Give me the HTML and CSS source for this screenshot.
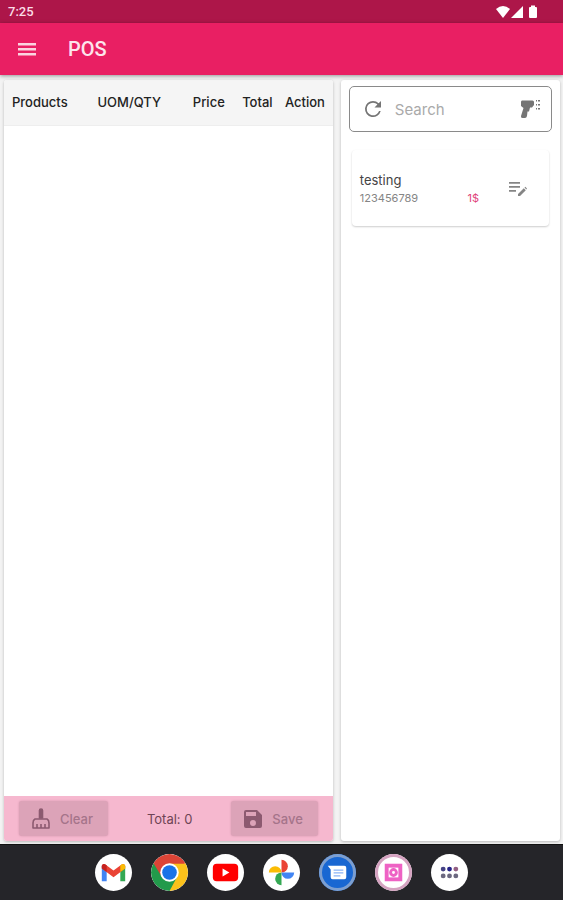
FILE: index.html
```
<!doctype html>
<html lang="en">
<head>
<meta charset="utf-8">
<meta name="viewport" content="width=device-width, initial-scale=1">
<title>POS</title>
<link rel="stylesheet" href="styles.css">
</head>
<body>
<div class="status-bar">
	<span class="clock">7:25</span>
	<svg class="status-icons" width="43" height="14" viewBox="0 0 43 14" fill="#fff" aria-hidden="true">
		<path d="M0 4Q7 -2 14 4L7 13Z"/>
		<path d="M27 1V13H15Z"/>
		<path d="M35 2V0.500H39V2H40Q41 2 41 3V12Q41 13 40 13H34Q33 13 33 12V3Q33 2 34 2Z"/>
	</svg>
</div>

<header class="app-bar">
	<button class="icon-button menu" aria-label="Menu">
		<svg width="18" height="14" viewBox="0 0 18 14" fill="#fbd3e0"><path d="M0 1h18v2.500H0zM0 6h18v2.500H0zM0 11h18v2.500H0z"/></svg>
	</button>
	<h1>POS</h1>
</header>

<main class="content">
	<section class="panel cart">
		<table class="cart-table">
			<thead>
				<tr>
					<th class="col-product">Products</th>
					<th class="col-uom">UOM/QTY</th>
					<th class="col-price">Price</th>
					<th class="col-total">Total</th>
					<th>Action</th>
				</tr>
			</thead>
			<tbody></tbody>
		</table>
		<div class="cart-footer">
			<button class="action" disabled>
				<svg width="18" height="22" viewBox="0 0 18 22" fill="none" stroke="#8c5a70" stroke-width="1.600" stroke-linejoin="round">
					<path d="M7.500 10V2.500Q7.500 1 9 1T10.500 2.500V10Z" fill="#8c5a70"/>
					<path d="M3 11H15Q17 12 17 15V20H1V15Q1 12 3 11ZM5 20V16M9 20V16M13 20V16"/>
				</svg>
				<span>Clear</span>
			</button>
			<span class="total">Total: 0</span>
			<button class="action" disabled>
				<svg width="18" height="18" viewBox="0 0 18 18" fill="#8c5a70" fill-rule="evenodd">
					<path d="M2 0H13L18 5V16Q18 18 16 18H2Q0 18 0 16V2Q0 0 2 0ZM2 2V6H12V2ZM9 10A3 3 0 1 0 9 16A3 3 0 1 0 9 10Z"/>
				</svg>
				<span>Save</span>
			</button>
		</div>
	</section>

	<section class="panel catalog">
		<div class="search">
			<button class="icon-button" aria-label="Refresh">
				<svg width="24" height="24" viewBox="0 0 24 24" fill="#757575"><path d="M17.650 6.350A7.960 7.960 0 0 0 12 4a8 8 0 1 0 7.730 10h-1.700A6.300 6.300 0 1 1 12 5.700c1.700 0 3.200.7 4.400 1.800L13.500 10.500H20V4z"/></svg>
			</button>
			<input type="text" placeholder="Search" aria-label="Search">
			<button class="icon-button" aria-label="Scan barcode">
				<svg width="20" height="20" viewBox="0 0 20 20" fill="#757575">
					<path d="M2 1.500H12.500Q14 1.500 14 3V6L12 8.500H10L9 12.500H7.500L7 17Q6.500 19 5 19H2.500Q0.500 19 1 17L3.500 9L1 7V3Q1 1.500 2 1.500Z"/>
					<path d="M16 1h1v1.500h-1zM18 1h2v1.500h-2zM16 5h1v1.500h-1zM18 5h2v1.500h-2zM16 9h1v1.500h-1zM18 9h2v1.500h-2z"/>
				</svg>
			</button>
		</div>

		<article class="product">
			<div class="product-info">
				<h2>testing</h2>
				<div class="product-meta">
					<span>123456789</span>
					<span class="price">1$</span>
				</div>
			</div>
			<button class="icon-button" aria-label="Edit product">
				<svg width="18" height="16" viewBox="0 0 18 16" fill="#858585">
					<path d="M0 1h11v1.800H0zM0 5h11v1.800H0zM0 9h7v1.800H0z"/>
					<path d="M9 13L14.800 7.200L16.800 9.200L11 15H9ZM15.500 6.500L16.300 5.700L18 7.500L17.300 8.500Z"/>
				</svg>
			</button>
		</article>
	</section>
</main>

<nav class="dock">
	<button class="app" aria-label="Gmail">
		<svg viewBox="0 0 38 38">
			<path d="M7 12V28H12V17Z" fill="#4285f4"/>
			<path d="M31 12V28H26V17Z" fill="#34a853"/>
			<path d="M7 12Q8 9 11 11L19 17L27 11Q30 9 31 12V15L19 24L7 15Z" fill="#ea4335"/>
			<path d="M7 12Q8 9 12 11.500V18.500L7 15Z" fill="#c5221f"/>
			<path d="M26 11.500Q30 9 31 12V15L26 18.500Z" fill="#fbbc04"/>
		</svg>
	</button>
	<button class="app" aria-label="Chrome">
		<svg viewBox="0 0 38 38">
			<path d="M19 19L2.550 9.500A19 19 0 0 1 35.450 9.500Z" fill="#dc4436"/>
			<path d="M19 19L35.450 9.500A19 19 0 0 1 19 38Z" fill="#fcc21b"/>
			<path d="M19 19L19 38A19 19 0 0 1 2.550 9.500Z" fill="#229a4b"/>
			<path d="M19 10H35.700L26.800 23.500Z" fill="#fcc21b"/>
			<path d="M26.800 23.500L19 38L12 24Z" fill="#229a4b"/>
			<path d="M11.200 23.500L2.550 9.500L19 10Z" fill="#dc4436"/>
			<circle cx="19" cy="19" r="9.500" fill="#fff"/>
			<circle cx="19" cy="19" r="7.500" fill="#1a73e8"/>
		</svg>
	</button>
	<button class="app" aria-label="YouTube">
		<svg viewBox="0 0 38 38">
			<rect x="6" y="10" width="26" height="18" rx="4" fill="#f00"/>
			<path d="M16 15V23L23 19Z" fill="#fff"/>
		</svg>
	</button>
	<button class="app" aria-label="Photos">
		<svg viewBox="0 0 38 38">
			<path d="M19 19V6A6.500 6.500 0 0 1 19 19Z" fill="#ea4335"/>
			<path d="M19 19H32A6.500 6.500 0 0 1 19 19Z" fill="#4285f4"/>
			<path d="M19 19V32A6.500 6.500 0 0 1 19 19Z" fill="#34a853"/>
			<path d="M19 19H6A6.500 6.500 0 0 1 19 19Z" fill="#fbbc04"/>
		</svg>
	</button>
	<button class="app messages" aria-label="Messages">
		<svg viewBox="0 0 38 38">
			<path d="M9 12H26Q28 12 28 14V24Q28 26 26 26H14Q12 26 12 24V16Z" fill="#fff"/>
			<path d="M15 16.500H25M15 19.500H25M15 22.500H22" stroke="#8ab4f8" stroke-width="1.300"/>
		</svg>
	</button>
	<button class="app pos" aria-label="POS">
		<svg viewBox="0 0 38 38">
			<rect x="12" y="12" width="14" height="14" fill="#fff" stroke="#ee62c4" stroke-width="4"/>
			<circle cx="19" cy="19" r="3" fill="none" stroke="#ee62c4" stroke-width="3"/>
		</svg>
	</button>
	<button class="app" aria-label="All apps">
		<svg viewBox="0 0 38 38" fill="#6b6880">
			<circle cx="12.500" cy="15.500" r="2.500" fill="#454385"/>
			<circle cx="19" cy="15.500" r="2.500" fill="#25238a"/>
			<circle cx="25.500" cy="15.500" r="2.500" fill="#946084"/>
			<circle cx="12.500" cy="22.500" r="2.500"/>
			<circle cx="19" cy="22.500" r="2.500"/>
			<circle cx="25.500" cy="22.500" r="2.500"/>
		</svg>
	</button>
</nav>
</body>
</html>
```
FILE: styles.css
```
* {
	margin: 0;
	padding: 0;
	box-sizing: border-box;
}

body {
	display: flex;
	flex-direction: column;
	min-height: 100vh;
	background: #f3f3f3;
	font: 13px Inter, sans-serif;
	color: #222;
}

button {
	border: 0;
	background: none;
	font: inherit;
}

svg {
	display: block;
}

.status-bar {
	display: flex;
	justify-content: space-between;
	align-items: center;
	height: 23px;
	padding: 0 24px 0 8px;
	background: #ad1649;
	color: #fbdde7;
	font: 500 13px Roboto, sans-serif;
}

.app-bar {
	display: flex;
	align-items: center;
	gap: 32px;
	height: 52px;
	padding: 0 18px;
	background: #e91f63;
	box-shadow: 0 1px 4px rgba(0, 0, 0, 0.4);
	z-index: 1;
}

.app-bar h1 {
	font: 500 20px Roboto, sans-serif;
	color: #fde4ec;
}

.icon-button {
	flex: none;
	cursor: pointer;
}

.content {
	flex: 1;
	display: grid;
	grid-template-columns: 3fr 2fr;
	gap: 8px;
	padding: 5px 3px 3px 4px;
}

.panel {
	display: flex;
	flex-direction: column;
	min-width: 0;
	background: #fff;
	border-radius: 3px;
	box-shadow: 0 1px 3px rgba(0, 0, 0, 0.25);
	overflow: hidden;
}

.cart {
	justify-content: space-between;
}

.catalog {
	padding: 6px 8px;
}

.cart-table {
	width: 100%;
	table-layout: fixed;
	border-collapse: collapse;
	background: #f5f5f5;
}

.cart-table th {
	height: 45px;
	padding-left: 8px;
	border-bottom: 1px solid #eee;
	font-weight: 500;
	text-align: left;
}

.col-product {
	width: 26%;
}

.col-uom {
	width: 29%;
}

.col-price {
	width: 15%;
}

.col-total {
	width: 13%;
}

.cart-footer {
	display: flex;
	justify-content: space-between;
	align-items: center;
	padding: 5px 15px;
	background: #f6b8cf;
}

.action {
	display: flex;
	align-items: center;
	gap: 10px;
	height: 35px;
	padding: 0 15px 0 13px;
	border-radius: 3px;
	background: #dca3b8;
	box-shadow: 0 0 2px rgba(120, 60, 80, 0.3);
	color: #a5748a;
	font-weight: 500;
}

.total {
	color: #6e4455;
}

.search {
	display: flex;
	align-items: center;
	gap: 10px;
	height: 46px;
	padding: 0 11px;
	border: 1px solid #8a8a8a;
	border-radius: 5px;
}

.search input {
	flex: 1;
	min-width: 0;
	border: 0;
	outline: 0;
	background: none;
	font: 15px Inter, sans-serif;
	color: #444;
}

.search input::placeholder {
	color: #aaa;
}

.product {
	display: flex;
	align-items: center;
	gap: 30px;
	height: 76px;
	margin: 18px 3px 0;
	padding: 2px 22px 0 8px;
	border-radius: 4px;
	box-shadow: 0 1px 2px rgba(0, 0, 0, 0.2);
}

.product-info {
	flex: 1;
}

.product h2 {
	font-size: 13px;
	font-weight: 400;
	line-height: 18px;
	color: #444;
}

.product-meta {
	display: flex;
	justify-content: space-between;
	font-size: 11px;
	line-height: 18px;
	color: #858585;
}

.product-meta .price {
	color: #e0457b;
}

.dock {
	display: flex;
	justify-content: center;
	align-items: center;
	gap: 19px;
	height: 56px;
	background: #252529;
	border-top: 1px solid #111;
}

.app {
	width: 37px;
	height: 37px;
	border-radius: 50%;
	background: #fff;
	overflow: hidden;
	cursor: pointer;
}

.messages {
	background: #1967d2;
	box-shadow: inset 0 0 0 3px #7d9fd0;
}

.pos {
	box-shadow: inset 0 0 0 3px #d5a3c1;
}
```
